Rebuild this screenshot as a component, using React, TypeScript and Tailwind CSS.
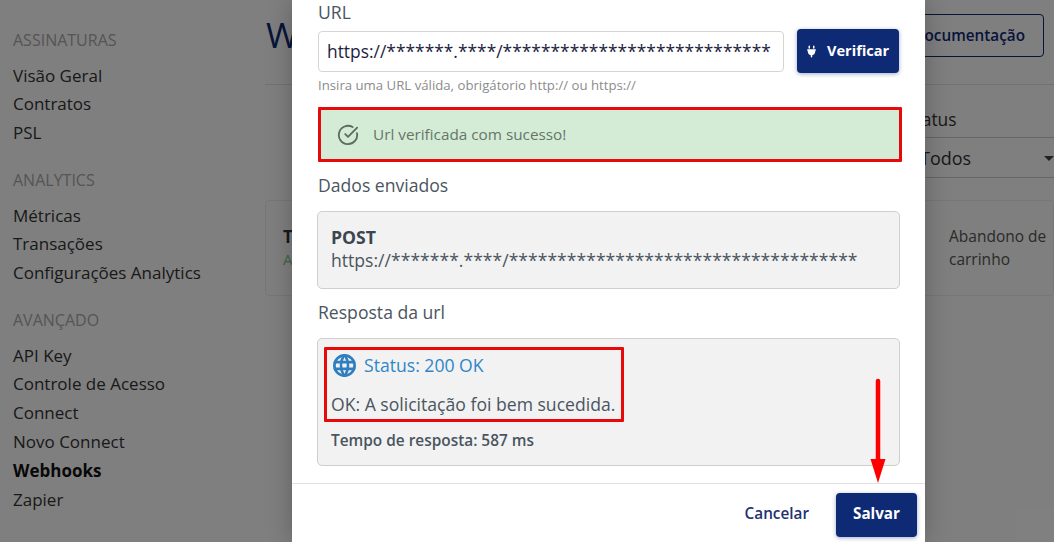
import { CircleCheckBig } from "lucide-react"
import { FaPlug } from "react-icons/fa6"
import { TbWorld } from "react-icons/tb"

const maskedUrl = "https://*******.****/****************************"
const maskedUrlLong = "https://*******.****/************************************"

const menu = [
  { title: "ASSINATURAS", items: ["Visão Geral", "Contratos", "PSL"] },
  { title: "ANALYTICS", items: ["Métricas", "Transações", "Configurações Analytics"] },
  { title: "AVANÇADO", items: ["API Key", "Controle de Acesso", "Connect", "Novo Connect", "Webhooks", "Zapier"] },
]

const Sidebar = () => (
  <aside className="w-[265px] shrink-0 pl-[13px] pt-[31px]">
    {menu.map((group) => (
      <div key={group.title} className="mb-[22.9px]">
        <p className="h-[19px] text-[16px] leading-[19px] text-[#aaaaaa]">{group.title}</p>
        <ul className="mt-[11.7px]">
          {group.items.map((item) => (
            <li
              key={item}
              className={`h-[28.8px] text-[17px] leading-[28.8px] ${item === "Webhooks" ? "font-bold text-[#111111]" : "text-[#333333]"}`}
            >
              {item}
            </li>
          ))}
        </ul>
      </div>
    ))}
  </aside>
)

const Background = () => (
  <main className="flex-1">
    <div className="flex h-[85px] items-start justify-between border-b border-[#e5e5e5]">
      <h1 className="ml-[1px] mt-[13px] text-[35px] leading-[44px] text-[#0f2a75]">Webhooks</h1>
      <button className="mr-[10px] mt-[14px] h-[43px] rounded-[4px] border border-[#0f2a75] px-[18px] text-[15.3px] font-semibold text-[#0f2a75]">
        Documentação
      </button>
    </div>
    <div className="flex justify-end">
      <div className="mt-[22px] w-[148px]">
        <p className="text-[17.4px] leading-[24px] text-[#333333]">Status</p>
        <div className="mt-[6px] flex h-[41px] items-center justify-between border-y border-[#cccccc] pl-[14px] pt-[1px] text-[18px] text-[#333333]">
          <span>Todos</span>
          <span className="h-0 w-0 border-x-[5px] border-t-[5px] border-x-transparent border-t-[#444444]" />
        </div>
      </div>
    </div>
    <div className="mt-[22px] flex h-[96px] rounded-[4px] border border-[#eeeeee]">
      <div className="flex-1 pl-[17px] pt-[24px]">
        <p className="text-[17px] font-bold leading-[24px] text-[#333333]">Teste</p>
        <p className="text-[15px] leading-[20px] text-[#7fc98a]">Ativo</p>
      </div>
      <p className="w-[104px] pt-[24px] text-[15.5px] leading-[23px] text-[#555555]">Abandono de carrinho</p>
    </div>
  </main>
)

const Modal = () => (
  <div className="absolute inset-y-0 left-[292px] flex w-[633px] flex-col bg-white shadow-[0_0_24px_rgba(0,0,0,0.25)]">
    <div className="h-[483px] overflow-hidden pl-[26px] pr-[23px] pt-[1px]">
      <label className="block text-[17.6px] leading-[22px] text-[#4a5560]">URL</label>

      <div className="mt-[6px] flex items-start">
        <div className="mt-[2px] flex h-[41px] w-[466px] items-center overflow-hidden whitespace-nowrap rounded-[4px] border border-[#d5d5d5] pl-[8px] text-[17.4px] text-[#1c2340]">
          {maskedUrl}
        </div>
        <button className="ml-[13px] flex h-[44px] w-[102px] items-center gap-[11px] rounded-[4px] bg-[#0f2a75] pl-[10px] text-[14.6px] font-bold text-white shadow-[0_1px_4px_rgba(15,42,117,0.4)]">
          <FaPlug className="h-[13px] w-[9px]" />
          Verificar
        </button>
      </div>
      <p className="mt-[4px] text-[13.2px] leading-[16px] text-[#8c8c8c]">Insira uma URL válida, obrigátorio http:// ou https://</p>

      <div className="mt-[14px] flex h-[55px] w-[584px] items-center rounded-[1px] border-[3px] border-[#e60a0a] bg-[#d4ecd5] pl-[16px] text-[15.3px] text-[#66756a]">
        <CircleCheckBig className="h-[22px] w-[22px] text-[#5d6b60]" strokeWidth={2} />
        <span className="ml-[14px]">Url verificada com sucesso!</span>
      </div>

      <h2 className="mt-[12px] text-[17.6px] leading-[22px] text-[#4a5560]">Dados enviados</h2>
      <div className="-ml-px mt-[15px] h-[78px] w-[583px] rounded-[5px] border border-[#cfcfcf] bg-[#f2f2f2] pl-[13px] pt-[14px] text-[17.6px] text-[#4a5560]">
        <p className="font-bold leading-[22px] text-[#3b4650]">POST</p>
        <p className="mt-[1px] whitespace-nowrap leading-[23px]">{maskedUrlLong}</p>
      </div>

      <h2 className="mt-[12px] text-[17.6px] leading-[22px] text-[#4a5560]">Resposta da url</h2>
      <div className="-ml-px mt-[15px] h-[128px] w-[583px] rounded-[5px] border border-[#cfcfcf] bg-[#f2f2f2] pl-[6px] pt-[8px]">
        <div className="h-[75px] w-[300px] rounded-[1px] border-[3px] border-[#e60a0a] pl-[4px] pt-[2px]">
          <div className="flex h-[27px] items-center gap-[6px] text-[17.6px] text-[#2f86c9]">
            <TbWorld className="h-[27px] w-[27px] text-[#2f7fc0]" strokeWidth={2.4} />
            <span>Status: 200 OK</span>
          </div>
          <p className="mt-[13px] whitespace-nowrap text-[17.6px] leading-[24px] text-[#4a5560]">OK: A solicitação foi bem sucedida.</p>
        </div>
        <p className="ml-[7px] mt-[9px] text-[15.4px] font-semibold leading-[20px] text-[#4a5560]">Tempo de resposta: 587 ms</p>
      </div>
    </div>

    <div className="flex flex-1 items-start justify-end gap-[27px] border-t border-[#e2e2e2] pr-[8px] pt-[9px]">
      <button className="h-[44px] pb-[3px] text-[15.3px] font-semibold text-[#1f3272]">Cancelar</button>
      <button className="h-[44px] w-[81px] rounded-[4px] bg-[#0f2a75] pb-[3px] text-[15.2px] font-bold text-white shadow-[0_1px_4px_rgba(15,42,117,0.4)]">
        Salvar
      </button>
    </div>

    {/* seta vermelha apontando para o salvar */}
    <svg className="absolute left-[571px] top-[378px]" width="30" height="106" viewBox="0 0 30 106" fill="none">
      <path d="M15 3V82" stroke="#ff0000" strokeWidth="4.5" strokeLinecap="round" />
      <path d="M7.5 81H22.5L15 105Z" fill="#ff0000" />
    </svg>
  </div>
)

export default function App() {
  return (
    <div className="relative h-[542px] w-[1054px] overflow-hidden bg-white font-['Open_Sans',sans-serif]">
      <div className="flex h-full">
        <Sidebar />
        <Background />
      </div>
      <div className="absolute inset-0 bg-black/50" />
      <Modal />
    </div>
  )
}
